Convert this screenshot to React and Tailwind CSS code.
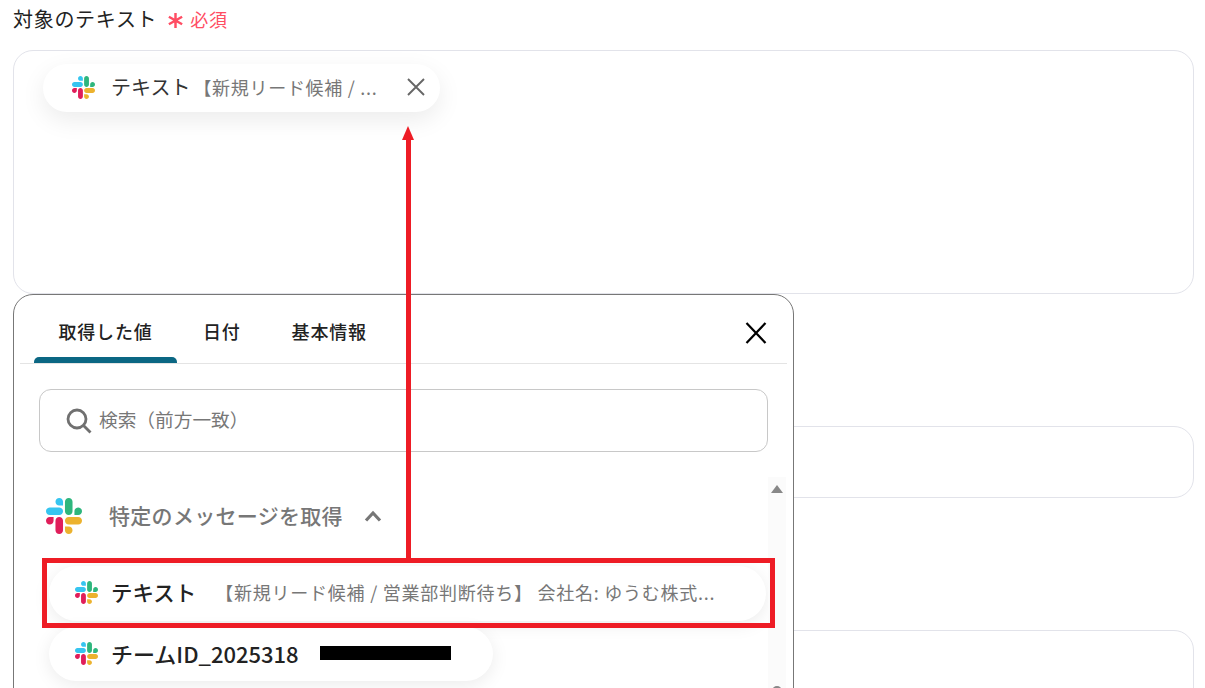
import React from "react";

function Slack({ className }) {
  return (
    <svg viewBox="0 0 122.8 122.8" className={className}>
      <path d="M25.8 77.6c0 7.1-5.8 12.9-12.9 12.9S0 84.7 0 77.6s5.8-12.9 12.9-12.9h12.9v12.9zm6.5 0c0-7.1 5.8-12.9 12.9-12.9s12.9 5.8 12.9 12.9v32.3c0 7.1-5.8 12.9-12.9 12.9s-12.9-5.8-12.9-12.9V77.6z" fill="#e01e5a" />
      <path d="M45.2 25.8c-7.1 0-12.9-5.8-12.9-12.9S38.1 0 45.2 0s12.9 5.8 12.9 12.9v12.9H45.2zm0 6.5c7.1 0 12.9 5.8 12.9 12.9s-5.8 12.9-12.9 12.9H12.9C5.8 58.1 0 52.3 0 45.2s5.8-12.9 12.9-12.9h32.3z" fill="#36c5f0" />
      <path d="M97 45.2c0-7.1 5.8-12.9 12.9-12.9s12.9 5.8 12.9 12.9-5.8 12.9-12.9 12.9H97V45.2zm-6.5 0c0 7.1-5.8 12.9-12.9 12.9s-12.9-5.8-12.9-12.9V12.9C64.7 5.8 70.5 0 77.6 0s12.9 5.8 12.9 12.9v32.3z" fill="#2eb67d" />
      <path d="M77.6 97c7.1 0 12.9 5.8 12.9 12.9s-5.8 12.9-12.9 12.9-12.9-5.8-12.9-12.9V97h12.9zm0-6.5c-7.1 0-12.9-5.8-12.9-12.9s5.8-12.9 12.9-12.9h32.3c7.1 0 12.9 5.8 12.9 12.9s-5.8 12.9-12.9 12.9H77.6z" fill="#ecb22e" />
    </svg>
  );
}

export default function App() {
  return (
    <div className="relative w-[1205px] h-[688px] overflow-hidden bg-white text-[#222] font-['Noto_Sans_CJK_JP','Noto_Sans',sans-serif]">
      <div className="px-[13px]">
        <div className="flex items-center h-[38px] text-[20px] leading-[38px] tracking-[0.7px]">
          <span>対象のテキスト</span>
          <svg viewBox="0 0 18 18" className="ml-[10px] mt-[2px] w-[17px] h-[17px] shrink-0" fill="none" stroke="#ff4d63" strokeWidth="2.6">
            <path d="M9 1v16M2 5l14 8M16 5L2 13" />
          </svg>
          <span className="ml-[6px] text-[#ff4d63] text-[18px]">必須</span>
        </div>
        <div className="mt-[12px] h-[244px] w-[1181px] rounded-[20px] border border-[#e2e3ea] p-[13px_0_0_29px]">
          <div className="flex items-center h-[48px] w-[397px] rounded-full bg-white pl-[29px] pb-[2px] shadow-[0_8px_24px_rgba(0,0,0,0.08)]">
            <Slack className="w-[23px] h-[23px] shrink-0" />
            <span className="ml-[16px] text-[20px] text-[#333] whitespace-nowrap">テキスト</span>
            <span className="ml-[3px] w-[190px] text-[18px] tracking-[0.7px] text-[#777] whitespace-nowrap">【新規リード候補 / ...</span>
            <svg viewBox="0 0 20 20" className="ml-[23px] w-[20px] h-[20px] shrink-0" fill="none" stroke="#666" strokeWidth="1.9">
              <path d="M2 2l16 16M18 2L2 18" />
            </svg>
          </div>
        </div>
        <div className="mt-[132px] h-[72px] w-[1181px] rounded-[20px] border border-[#e2e3ea]" />
        <div className="mt-[132px] h-[100px] w-[1181px] rounded-[20px] border border-[#e2e3ea]" />
      </div>

      <div className="absolute left-[13px] top-[294px] w-[781px] h-[420px] rounded-[20px] border border-[#777] bg-white">
        <div className="relative mx-[6px] h-[69px] border-b border-[#e4e4e4]">
          <div className="flex h-full items-start pl-[14px] text-[18px] font-medium leading-[26px] tracking-[0.8px] text-[#222]">
            <div className="relative w-[143px] h-[68px] pt-[23px] text-center">
              取得した値
              <div className="absolute left-0 bottom-0 h-[6px] w-full rounded-t-[5px] bg-[#0b6783]" />
            </div>
            <div className="ml-[26px] pt-[23px]">日付</div>
            <div className="ml-[51px] pt-[23px]">基本情報</div>
          </div>
          <svg viewBox="0 0 22 22" className="absolute left-[725px] top-[27px] w-[22px] h-[22px]" fill="none" stroke="#000" strokeWidth="2.2">
            <path d="M1.5 1l19 20M20.5 1l-19 20" />
          </svg>
        </div>

        <div className="ml-[25px] mt-[25px] flex items-center h-[63px] w-[729px] rounded-[12px] border border-[#c8c8c8] pl-[26px]">
          <svg viewBox="0 0 26 26" className="w-[26px] h-[26px] shrink-0" fill="none" stroke="#707070" strokeWidth="2.8">
            <circle cx="11" cy="11" r="9" />
            <path d="M17.5 17.5l7 7" />
          </svg>
          <span className="ml-[7px] pb-[2px] text-[18.7px] text-[#777] whitespace-nowrap">検索（前方一致）</span>
        </div>

        <div className="relative pt-[45px]">
          <div className="ml-[32px] flex items-center h-[38px]">
            <Slack className="w-[36px] h-[36px] shrink-0" />
            <span className="ml-[27px] pb-[1px] text-[21px] font-medium tracking-[0.3px] text-[#777] whitespace-nowrap">特定のメッセージを取得</span>
            <svg viewBox="0 0 18 12" className="ml-[21px] mb-[1px] w-[18px] h-[12px]" fill="none" stroke="#777" strokeWidth="3.2">
              <path d="M2 10.5l7-7.5 7 7.5" />
            </svg>
          </div>

          <div className="ml-[35px] mt-[31px] flex items-center h-[55px] w-[717px] rounded-full bg-white pl-[26px] pb-[2px] shadow-[0_4px_18px_rgba(0,0,0,0.08)]">
            <Slack className="w-[23px] h-[23px] shrink-0" />
            <span className="ml-[13px] text-[21.5px] font-medium text-[#222] whitespace-nowrap">テキスト</span>
            <span className="ml-[19px] text-[18px] tracking-[0.75px] text-[#777] whitespace-nowrap">【新規リード候補 / 営業部判断待ち】 会社名: ゆうむ株式...</span>
          </div>

          <div className="ml-[35px] mt-[6px] flex items-center h-[54px] w-[444px] rounded-full bg-white pl-[26px] pb-[2px] shadow-[0_4px_18px_rgba(0,0,0,0.08)]">
            <Slack className="w-[23px] h-[23px] shrink-0" />
            <span className="ml-[13px] text-[22px] font-medium text-[#222] whitespace-nowrap">チームID_2025318</span>
            <span className="ml-[21px] h-[14px] w-[131px] bg-black" />
          </div>

          <div className="absolute left-[754px] top-[25px] w-[18px] h-[240px] bg-[#fbfbfb]">
            <div className="mx-auto mt-[8px] h-0 w-0 border-x-[6px] border-b-[8px] border-x-transparent border-b-[#888]" />
          </div>
          <div className="absolute left-[758px] top-[234px] h-[10px] w-[10px] rounded-full bg-[#888]" />
        </div>
      </div>

      <div className="absolute left-[42px] top-[558px] h-[70px] w-[733px] border-[5px] border-[#ee1c25]" />
      <div className="absolute left-[406px] top-[138px] h-[420px] w-[5px] bg-[#ee1c25]" />
      <div className="absolute left-[402px] top-[126px] h-0 w-0 border-x-[6.5px] border-b-[14px] border-x-transparent border-b-[#ee1c25]" />
    </div>
  );
}
